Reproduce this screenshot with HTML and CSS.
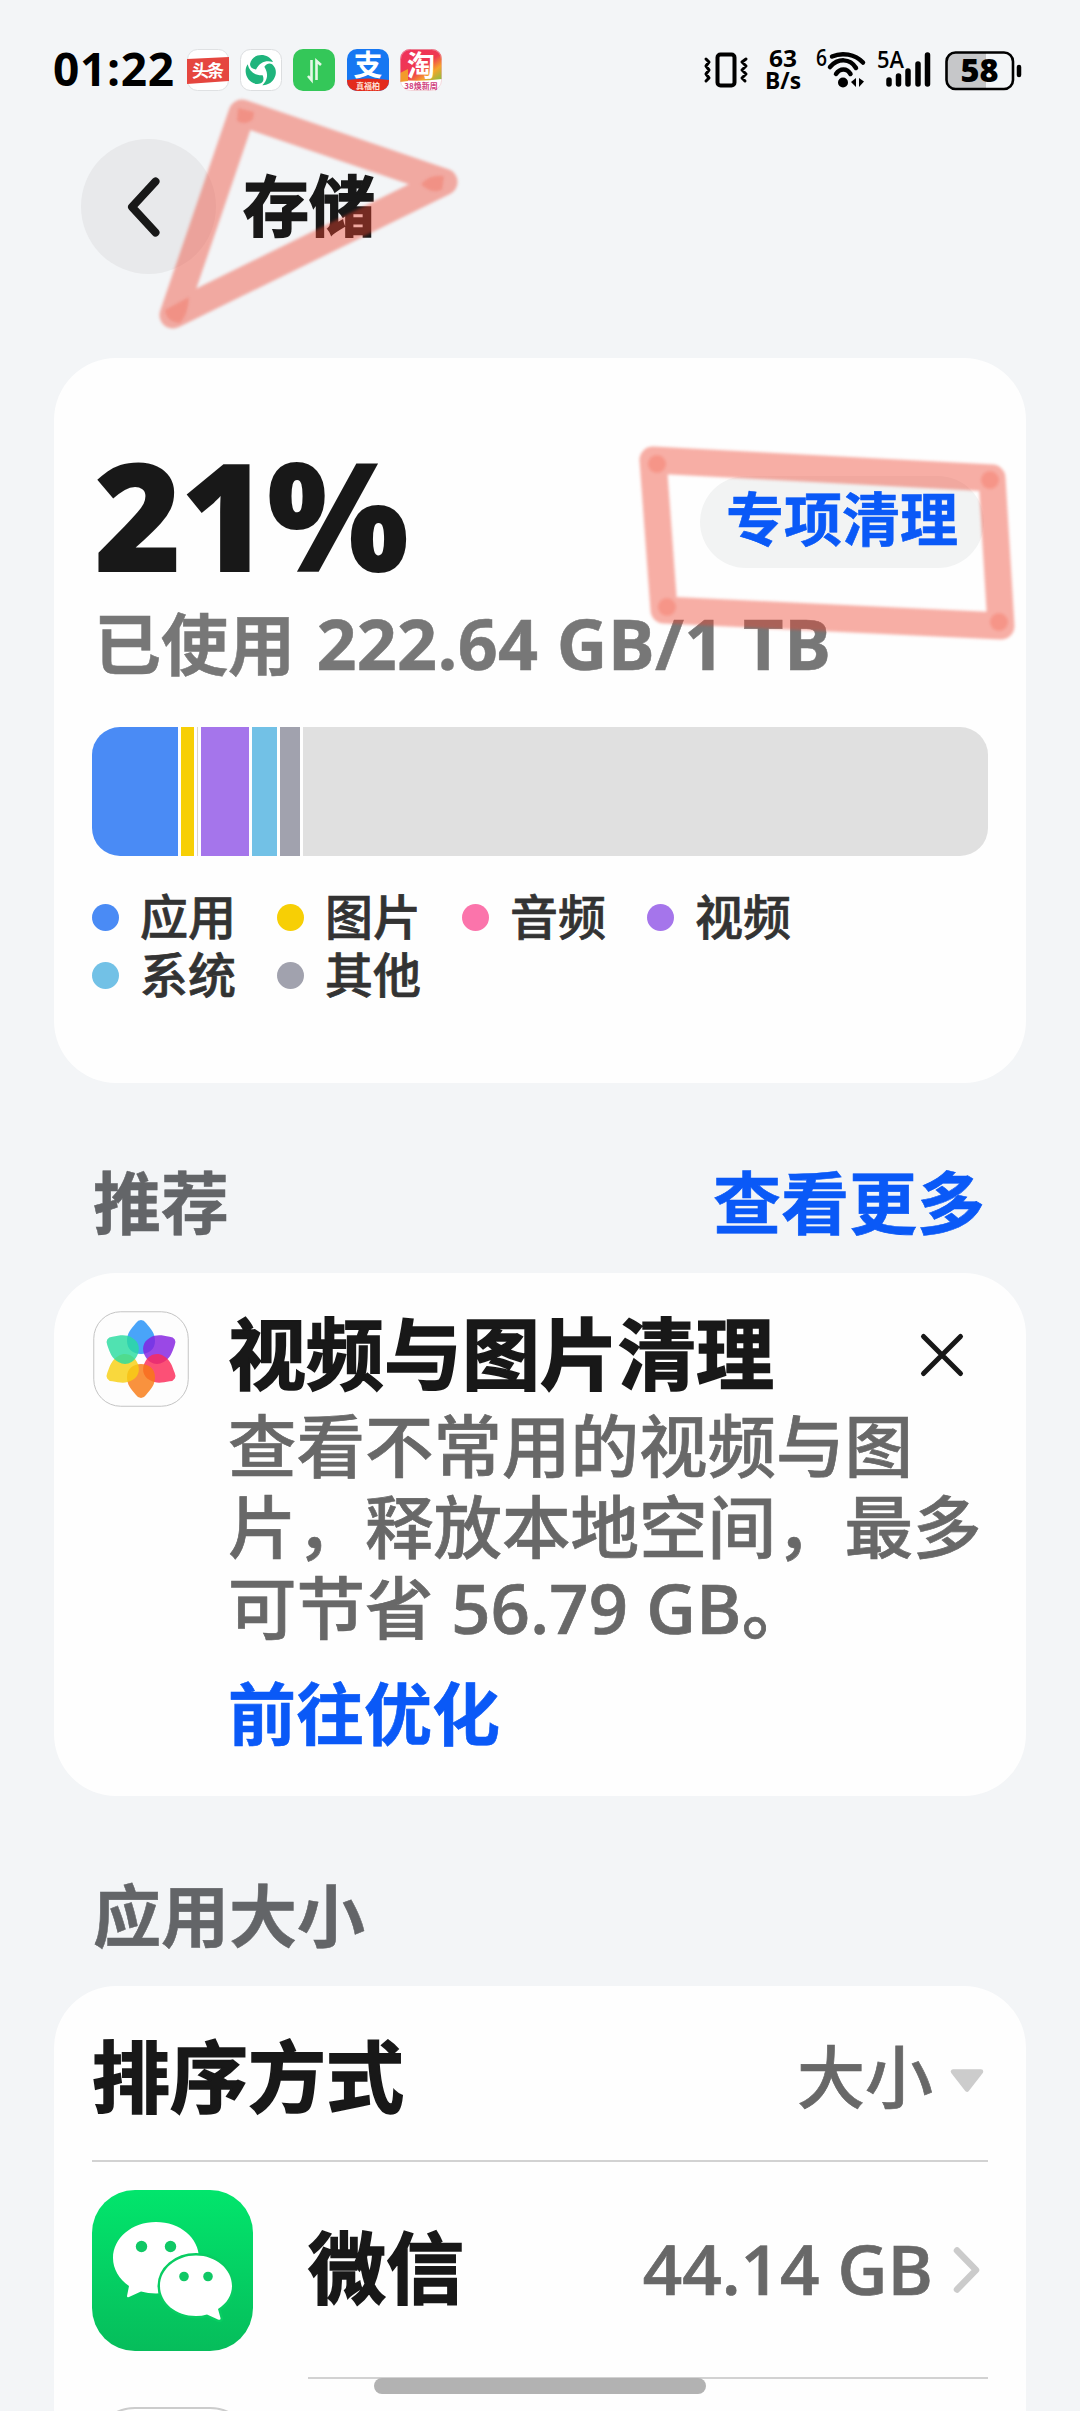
FILE: index.html
```html
<!DOCTYPE html>
<html lang="zh-CN">
<head>
<meta charset="utf-8">
<title>存储</title>
<link rel="stylesheet" href="styles.css">
</head>
<body>
<div class="screen">
  <header class="status-bar">
    <div class="status-left">
      <span class="clock">01:22</span>
      <svg class="app-badge" viewBox="0 0 42 42"><rect x=".5" y=".5" width="41" height="41" rx="10" fill="#fff" stroke="#dfe1e3"/><path d="M0 10L42 8V32L0 35Z" fill="#e5463f"/><text x="21" y="28" text-anchor="middle" textLength="32" font-size="17" font-weight="700" fill="#fff">头条</text></svg>
      <svg class="app-badge" viewBox="0 0 42 42"><rect x=".5" y=".5" width="41" height="41" rx="10" fill="#fff" stroke="#dcdee0"/><g fill="#1fb47c"><path d="M10 15C12 4 28 3 33 13C26 11 20 13 16 20.500C12 20 10 18 10 15Z"/><path d="M10 15C12 4 28 3 33 13C26 11 20 13 16 20.500C12 20 10 18 10 15Z" transform="rotate(120 21 21.5)"/><path d="M10 15C12 4 28 3 33 13C26 11 20 13 16 20.500C12 20 10 18 10 15Z" transform="rotate(240 21 21.5)"/></g></svg>
      <svg class="app-badge" viewBox="0 0 42 42"><rect width="42" height="42" rx="10" fill="#34c759"/><path d="M18.500 11V31L15 27M23.500 31V12L28 16" fill="none" stroke="#e4f8e8" stroke-width="2.600"/></svg>
      <svg class="app-badge" viewBox="0 0 42 42"><defs><clipPath id="r"><rect width="42" height="42" rx="10"/></clipPath></defs><g clip-path="url(#r)"><rect width="42" height="42" fill="#1677f2"/><path d="M0 31Q21 28 42 31V42H0Z" fill="#e32a1c"/></g><text x="21" y="27" text-anchor="middle" font-size="29" font-weight="700" fill="#fff">支</text><text x="21" y="39.500" text-anchor="middle" font-size="8" font-weight="700" fill="#fde3d8">真福柏</text></svg>
      <svg class="app-badge" viewBox="0 0 42 42"><defs><linearGradient id="tb" x1="0" y1="0" x2="1" y2="1"><stop offset="0" stop-color="#f0305c"/><stop offset=".55" stop-color="#ee3a50"/><stop offset=".75" stop-color="#f6a42c"/><stop offset="1" stop-color="#7cc142"/></linearGradient></defs><g clip-path="url(#r)"><rect width="42" height="42" fill="#fff"/><path d="M0 0H42V30Q21 33 0 31Z" fill="url(#tb)"/><path d="M0 24L8 20V32L0 33Z" fill="#f39a2b"/></g><rect x=".5" y=".5" width="41" height="41" rx="10" fill="none" stroke="#e7b9c2" stroke-opacity=".6"/><text x="21" y="27" text-anchor="middle" font-size="28" font-weight="700" fill="#fff">淘</text><text x="21" y="39.500" text-anchor="middle" font-size="8" font-weight="700" fill="#d0407c">38焕新周</text></svg>
    </div>
    <svg class="status-right" viewBox="0 0 330 50">
      <g fill="none" stroke="#000" stroke-linecap="round" stroke-linejoin="round">
        <rect x="18.500" y="9.500" width="17" height="31" rx="3" stroke-width="4"/>
        <path d="M7 14L10 17L7 21L10 25L7 29L10 33L7 36M47 14L43 17L47 21L43 25L47 29L43 33L46 36" stroke-width="3"/>
      </g>
      <g class="latin" font-weight="700">
        <text x="84" y="21.500" text-anchor="middle" font-size="23" textLength="28" lengthAdjust="spacingAndGlyphs">63</text>
        <text x="84" y="44" text-anchor="middle" font-size="23" textLength="36" lengthAdjust="spacingAndGlyphs">B/s</text>
        <text x="117" y="21" font-size="23" font-weight="600" textLength="11" lengthAdjust="spacingAndGlyphs">6</text>
        <text x="178" y="23" font-size="24" font-weight="600" textLength="27" lengthAdjust="spacingAndGlyphs">5A</text>
      </g>
      <path d="M133 11.500C143 7 156 9 164 17.500M131 22C139 13 151 13 157 23M137 29C141 23 148 23 151.500 29" fill="none" stroke="#000" stroke-width="4.500" stroke-linecap="round"/>
      <circle cx="144" cy="37.500" r="5"/>
      <path d="M152 37L157 33V42ZM165 36.500L160 33V42Z"/>
      <path d="M190 35V39M199.500 31V39M209 26V39M219 19V39M228.500 10V39" stroke="#000" stroke-width="5.500" stroke-linecap="round"/>
      <path d="M256 7H287V44H256Q247 44 247 35V16Q247 7 256 7Z" fill="#c6c7c9"/>
      <rect x="247.500" y="7.500" width="66.500" height="36.500" rx="9" fill="none" stroke="#000" stroke-width="2.600"/>
      <path d="M320 22V30" stroke="#000" stroke-width="4.500" stroke-linecap="round"/>
      <text class="latin" x="280.500" y="37" text-anchor="middle" font-size="32" font-weight="800" textLength="38" lengthAdjust="spacingAndGlyphs">58</text>
    </svg>
  </header>

  <div class="title-bar">
    <span class="back"><svg width="40" height="68" viewBox="0 0 40 68"><path d="M31.500 8.500L8 34L31.500 59.500" fill="none" stroke="#181818" stroke-width="8" stroke-linecap="round" stroke-linejoin="round"/></svg></span>
    <h1>存储</h1>
  </div>

  <section class="card usage">
    <div class="usage-top">
      <span class="percent">21%</span>
      <span class="pill">专项清理</span>
    </div>
    <p class="used">已使用 <span>222.64 GB/1 TB</span></p>
    <div class="bar">
      <i class="apps" style="width:86px"></i>
      <i class="pics" style="width:13px"></i>
      <i class="audio" style="width:1px"></i>
      <i class="video" style="width:48px"></i>
      <i class="system" style="width:25px"></i>
      <i class="other" style="width:20px"></i>
      <i class="free"></i>
    </div>
    <ul class="legend">
      <li><b class="apps"></b>应用</li>
      <li><b class="pics"></b>图片</li>
      <li><b class="audio"></b>音频</li>
      <li><b class="video"></b>视频</li>
      <li><b class="system"></b>系统</li>
      <li><b class="other"></b>其他</li>
    </ul>
  </section>

  <div class="section-head"><h2>推荐</h2><a>查看更多</a></div>

  <section class="card tip">
    <svg class="gallery" viewBox="0 0 96 96">
      <rect x=".75" y=".75" width="94.500" height="94.500" rx="27" fill="#fdfdfd" stroke="#c4c4c4"/>
      <g fill-opacity=".82">
        <path d="M48 9Q45 9 43 12C38 18 34 22 34 30C34 38 40 43 48 43C56 43 62 38 62 30C62 22 58 18 53 12Q51 9 48 9Z" fill="#2190f8"/>
        <path d="M48 9Q45 9 43 12C38 18 34 22 34 30C34 38 40 43 48 43C56 43 62 38 62 30C62 22 58 18 53 12Q51 9 48 9Z" fill="#8420e0" transform="rotate(60 48 48)"/>
        <path d="M48 9Q45 9 43 12C38 18 34 22 34 30C34 38 40 43 48 43C56 43 62 38 62 30C62 22 58 18 53 12Q51 9 48 9Z" fill="#fb2a58" transform="rotate(120 48 48)"/>
        <path d="M48 9Q45 9 43 12C38 18 34 22 34 30C34 38 40 43 48 43C56 43 62 38 62 30C62 22 58 18 53 12Q51 9 48 9Z" fill="#f87a14" transform="rotate(180 48 48)"/>
        <path d="M48 9Q45 9 43 12C38 18 34 22 34 30C34 38 40 43 48 43C56 43 62 38 62 30C62 22 58 18 53 12Q51 9 48 9Z" fill="#f8d012" transform="rotate(240 48 48)"/>
        <path d="M48 9Q45 9 43 12C38 18 34 22 34 30C34 38 40 43 48 43C56 43 62 38 62 30C62 22 58 18 53 12Q51 9 48 9Z" fill="#2adca0" transform="rotate(300 48 48)"/>
      </g>
      <circle cx="48" cy="48" r="4" fill="#fff"/>
    </svg>
    <div class="tip-body">
      <div class="tip-title"><h3>视频与图片清理</h3><svg width="44" height="44" viewBox="0 0 44 44"><path d="M3.500 3.500L40.500 40.500M40.500 3.500L3.500 40.500" stroke="#181818" stroke-width="5" stroke-linecap="round"/></svg></div>
      <p class="desc">查看不常用的视频与图<br>片，释放本地空间，最多<br>可节省 <span>56.79 GB</span>。</p>
      <a class="go">前往优化</a>
    </div>
  </section>

  <div class="section-head"><h2>应用大小</h2></div>

  <section class="card apps-card">
    <div class="row sort">
      <span class="name">排序方式</span>
      <span class="value">大小</span>
      <svg class="tail" width="36" height="26" viewBox="0 0 36 26"><path d="M4 3.500H32L18 21.500Z" fill="#ccc" stroke="#ccc" stroke-width="4.500" stroke-linejoin="round"/></svg>
    </div>
    <div class="row app">
      <svg class="wechat" viewBox="0 0 161 161">
        <defs><linearGradient id="wx" x1="0" y1="0" x2="0" y2="1"><stop offset="0" stop-color="#02e56c"/><stop offset="1" stop-color="#06bd5b"/></linearGradient></defs>
        <rect width="161" height="161" rx="43" fill="url(#wx)"/>
        <path d="M64 32C40 32 21 48 21 68C21 79 27 89 37 96L35 106Q35 108 37 107L49 101.500Q56 103.500 64 103.500C88 103.500 107 88 107 68C107 48 88 32 64 32Z" fill="#fff"/>
        <circle cx="49.500" cy="56.500" r="5.700" fill="#10c865"/><circle cx="78.500" cy="56.500" r="5.700" fill="#10c865"/>
        <path d="M104 65.500C84 65.500 68 79 68 96C68 113 84 126 104 126Q110 126 115 124.500L126 129.500Q129 130.500 128.500 128L126 119C135 113.500 140 105 140 96C140 79 124 65.500 104 65.500Z" fill="#fff" stroke="#08cd62" stroke-width="5" paint-order="stroke"/>
        <circle cx="92" cy="86.500" r="4.800" fill="#10c865"/><circle cx="116" cy="86.500" r="4.800" fill="#10c865"/>
      </svg>
      <div class="app-line">
        <span class="name">微信</span>
        <span class="value">44.14 GB</span>
        <svg class="tail" width="36" height="50" viewBox="0 0 36 50"><path d="M8 5.500L27 25L8 44.500" fill="none" stroke="#cbcbcb" stroke-width="6.500" stroke-linecap="round" stroke-linejoin="round"/></svg>
      </div>
    </div>
    <div class="next-icon"></div>
  </section>

  <div class="home-bar"></div>
  <svg class="marks" width="1080" height="700" viewBox="0 0 1080 700">
    <g stroke="#ee4630" stroke-opacity=".43" stroke-width="27" stroke-linecap="round" stroke-linejoin="round" fill="none">
      <path d="M242 113L444 182L173 315Z"/>
      <path d="M653 460L992 478L1001 626L664 610Z"/>
    </g>
    <g fill="#ee4630" fill-opacity=".25">
      <path d="M238 108L254 112L253 119Q246 126 237 121Z"/><path d="M421 184Q430 174 444 176L442 190Q430 194 421 184Z"/><path d="M165 310L189 297Q188 315 180 323Q166 322 165 310Z"/>
      <circle cx="657" cy="464" r="9"/><circle cx="990" cy="480" r="9"/><circle cx="999" cy="622" r="9"/><circle cx="667" cy="607" r="9"/>
    </g>
  </svg>
</div>
</body>
</html>
```
FILE: styles.css
```css
* { box-sizing: border-box; margin: 0; padding: 0; }
body { background: #f3f5f7; }
.screen {
  position: relative;
  width: 1080px;
  height: 2411px;
  overflow: hidden;
  display: flex;
  flex-direction: column;
  background: #f3f5f7;
  color: #181818;
  font-family: "Open Sans", "Noto Sans CJK SC", sans-serif;
}
h1, h2, h3 { font-weight: 700; }
svg { display: block; flex: none; overflow: visible; }
svg text { font-family: "Noto Sans CJK SC", sans-serif; }
svg .latin, svg .latin text { font-family: "Open Sans", sans-serif; }

.status-bar {
  height: 139px;
  padding: 45px 51px 0 53px;
  display: flex;
  justify-content: space-between;
  align-items: flex-start;
}
.status-left { display: flex; align-items: center; height: 50px; gap: 11.3px; }
.clock { width: 122.500px; margin-top: -4px; font-size: 46px; font-weight: 700; letter-spacing: .7px; line-height: 50px; color: #000; white-space: nowrap; }
.app-badge { width: 42px; height: 42px; }
.status-right { width: 330px; height: 50px; }

.title-bar { display: flex; align-items: center; height: 135px; padding-left: 81px; gap: 27px; }
.back { width: 135px; height: 135px; border-radius: 50%; background: #e8e9eb; display: flex; align-items: center; justify-content: center; padding-right: 9px; }
.title-bar h1 { font-size: 66px; line-height: 72px; height: 76px; }
.title-bar h1, .tip-title h3, .name { -webkit-text-stroke: 1.6px currentColor; }

.card { margin: 0 54px; background: #fefefe; border-radius: 62px; }
.usage { margin-top: 84px; height: 725px; padding: 0 38px; }
.usage-top { display: flex; justify-content: space-between; height: 250px; }
.percent { padding: 81px 0 0 2px; font-size: 150px; font-weight: 800; letter-spacing: -1.5px; line-height: 150px; }
.pill { margin: 118px 4px 0 0; width: 284px; height: 92px; border-radius: 46px; background: #f2f3f3; color: #0a59f7; font-size: 58px; font-weight: 700; line-height: 86px; text-align: center; -webkit-text-stroke: .6px currentColor; }
.used { padding-left: 2px; height: 119px; font-size: 67px; font-weight: 700; line-height: 72px; color: #777; white-space: nowrap; -webkit-text-stroke: .5px currentColor; }
.used span { margin-left: 4px; font-size: 70px; letter-spacing: .3px; line-height: 1; }
.bar { display: flex; gap: 3px; height: 129px; border-radius: 28px; overflow: hidden; }
.bar .free { flex: 1; background: #e0e0e0; }
.apps { background: #4a8bf5; }
.pics { background: #f7cf05; }
.audio { background: #fb74ab; }
.bar .audio { background: #ddd3c8; }
.video { background: #a575eb; }
.system { background: #72c1e6; }
.other { background: #a1a2ae; }
.legend { list-style: none; display: grid; grid-template-columns: repeat(4, 185px); grid-auto-rows: 58px; margin-top: 32px; font-size: 48px; font-weight: 500; color: #333; -webkit-text-stroke: .7px currentColor; }
.legend li { display: flex; align-items: center; gap: 21px; line-height: 58px; white-space: nowrap; }
.legend b { width: 27px; height: 27px; border-radius: 50%; }

.section-head { display: flex; justify-content: space-between; height: 190px; padding: 80px 95px 0 93px; font-size: 68px; line-height: 80px; }
.section-head h2 { font-size: 68px; color: #636568; -webkit-text-stroke: .5px currentColor; }
.section-head a, .go { color: #0a59f7; font-weight: 700; -webkit-text-stroke: .6px currentColor; }

.tip { height: 523px; display: flex; padding: 38px 38px 0 39px; }
.gallery { width: 96px; height: 96px; margin-right: 39px; }
.tip-body { flex: 1; white-space: nowrap; }
.tip-title { display: flex; justify-content: space-between; align-items: center; height: 88px; padding-right: 24px; }
.tip-title h3 { font-size: 78px; line-height: 86px; padding-bottom: 2px; }
.desc { padding-top: 6px; font-size: 68.500px; line-height: 81px; font-weight: 500; color: #686868; -webkit-text-stroke: .7px currentColor; }
.desc span { font-weight: 600; letter-spacing: .3px; }
.go { display: block; margin-top: 25px; font-size: 68px; line-height: 81px; }

.apps-card { height: 425px; padding: 0 38px; border-radius: 62px 62px 0 0; flex: none; }
.row { display: flex; align-items: center; white-space: nowrap; }
.sort { height: 176px; padding: 8px 0 0; border-bottom: 2px solid #d2d2d2; }
.name { flex: 1; font-size: 78px; font-weight: 700; line-height: 90px; }
.value { font-size: 68px; font-weight: 500; line-height: 80px; color: #686868; margin-right: 16px; -webkit-text-stroke: .7px currentColor; }
.app .value { padding-bottom: 4px; font-size: 69px; font-weight: 600; }
.app .name { padding-bottom: 4px; }
.tail { margin-right: 3px; }
.sort .tail { margin-top: 8px; }
.app { height: 217px; gap: 55px; }
.wechat { width: 161px; height: 161px; }
.app-line { flex: 1; display: flex; align-items: center; height: 217px; border-bottom: 2px solid #d2d2d2; }
.next-icon { width: 161px; height: 161px; margin-top: 28px; border: 2px solid #ccc; border-radius: 43px; background: #fff; }

.home-bar { position: absolute; left: 374px; top: 2378px; width: 332px; height: 16px; border-radius: 8px; background: #b2b2b2; }
.marks { position: absolute; left: 0; top: 0; filter: blur(1.8px); }
```
